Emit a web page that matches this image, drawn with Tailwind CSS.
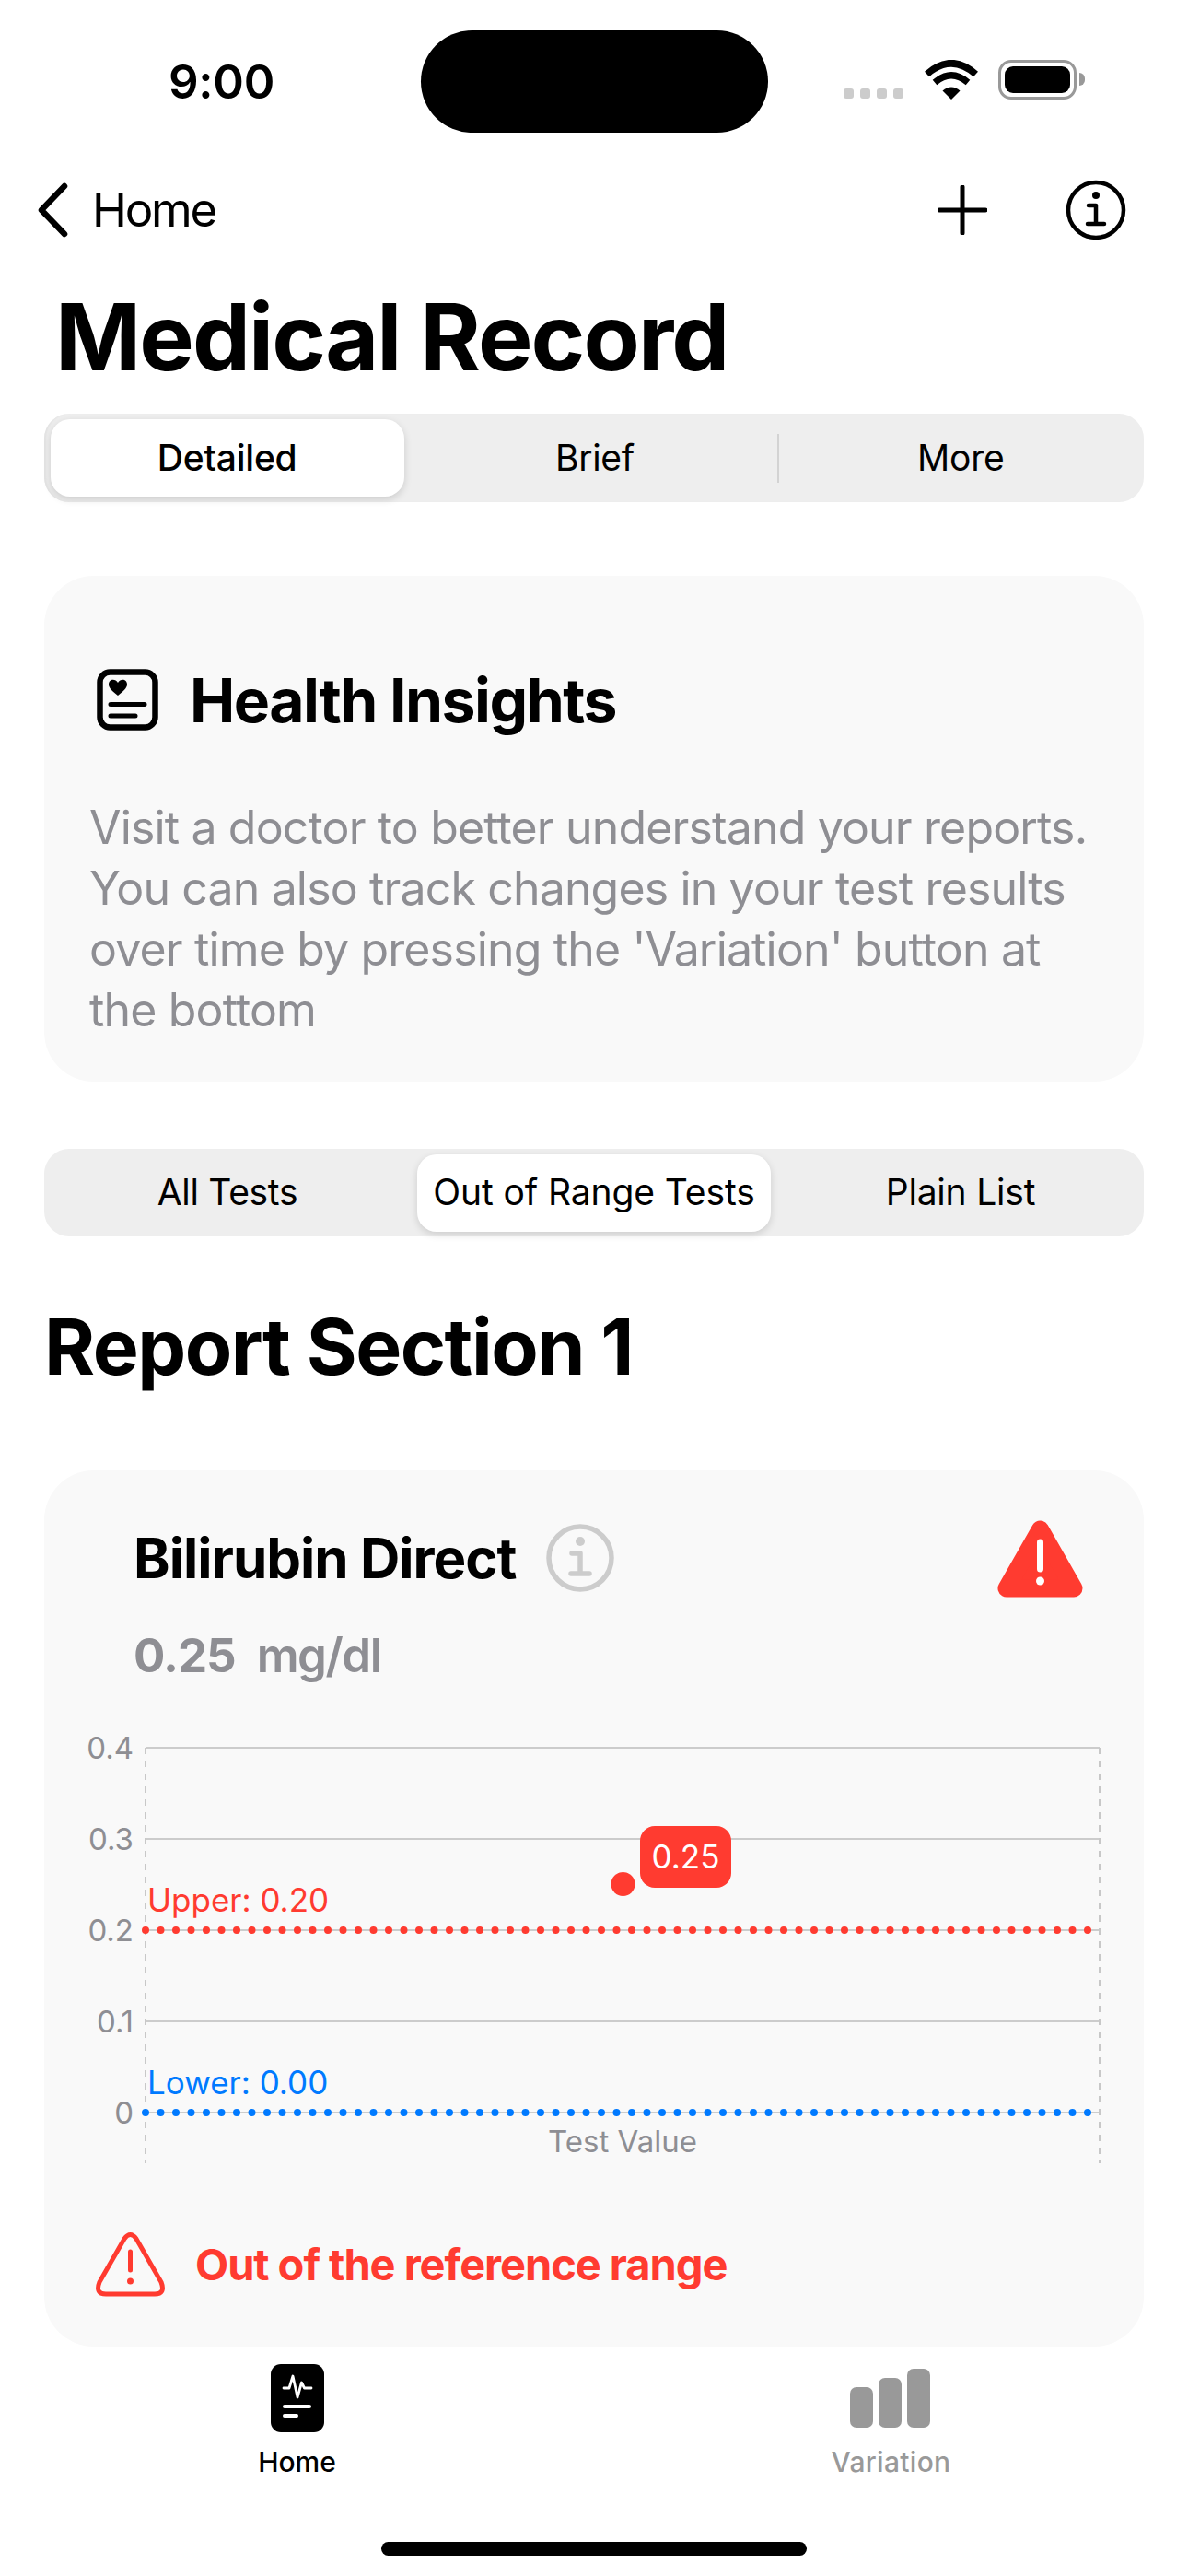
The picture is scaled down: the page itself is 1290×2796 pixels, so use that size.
<!DOCTYPE html>
<html lang="en">
<head>
    <meta charset="UTF-8">
    <meta name="viewport" content="width=device-width, initial-scale=1.0">
    <script src="https://cdn.jsdelivr.net/npm/@tailwindcss/browser@4"></script>
    <title>Medical Record</title>
</head>
<body class="w-[1290px] h-[2796px] bg-white text-black overflow-hidden flex flex-col font-[Inter,sans-serif]">

    <!-- Status bar -->
    <div class="h-[178px] pt-[33px] flex items-start shrink-0">
        <div class="w-[457px] pl-[183px] pt-[26px] text-[51px] leading-[60px] font-semibold tracking-[-0.3px]">9:00</div>
        <div class="w-[377px] h-[111px] bg-black rounded-full"></div>
        <div class="pl-[82px] pt-[32px] flex items-start">
            <div class="flex gap-[7px] pt-[31px]">
                <span class="w-[11px] h-[11px] rounded-[3px] bg-[#cccccc]"></span>
                <span class="w-[11px] h-[11px] rounded-[3px] bg-[#cccccc]"></span>
                <span class="w-[11px] h-[11px] rounded-[3px] bg-[#cccccc]"></span>
                <span class="w-[11px] h-[11px] rounded-[3px] bg-[#cccccc]"></span>
            </div>
            <svg class="ml-[23px]" width="58" height="43" viewBox="0 0 58 43">
                <path d="M29 43 L19.5 33.5 Q29 25.5 38.5 33.5Z" fill="#000"/>
                <path d="M11 24.5 Q29 9 47 24.5" fill="none" stroke="#000" stroke-width="7"/>
                <path d="M2.5 15.5 Q29 -8 55.5 15.5" fill="none" stroke="#000" stroke-width="7.5"/>
            </svg>
            <div class="ml-[22px] w-[85px] h-[43px] rounded-[14px] border-[3px] border-[#999999] p-[4px]">
                <div class="w-full h-full rounded-[9px] bg-black"></div>
            </div>
            <div class="ml-[3px] mt-[14px] w-[6px] h-[14px] rounded-r-full bg-[#999999]"></div>
        </div>
    </div>

    <!-- Nav bar -->
    <div class="h-[100px] pl-[39px] pr-[67px] flex items-center shrink-0">
        <svg width="36" height="60" viewBox="0 0 36 60">
            <path d="M31 4 L6 30 L31 56" fill="none" stroke="#000" stroke-width="6.5" stroke-linecap="round" stroke-linejoin="round"/>
        </svg>
        <span class="ml-[25px] text-[51px] leading-[60px] tracking-[-2.2px]">Home</span>
        <svg class="ml-auto" width="54" height="54" viewBox="0 0 54 54">
            <path d="M27 2 V52 M2 27 H52" fill="none" stroke="#000" stroke-width="5" stroke-linecap="round"/>
        </svg>
        <svg class="ml-[85px]" width="66" height="66" viewBox="0 0 66 66">
            <circle cx="33" cy="33" r="30" fill="none" stroke="#000" stroke-width="4.5"/>
            <circle cx="33" cy="17" r="4" fill="#000"/>
            <path d="M25 28 H33 V48 M24 48 H42" fill="none" stroke="#000" stroke-width="4.5" stroke-linecap="round" stroke-linejoin="round"/>
        </svg>
    </div>

    <!-- Title -->
    <h1 class="h-[171px] pl-[60px] pt-[28px] text-[100px] leading-[120px] font-bold tracking-[-1.9px] shrink-0">Medical Record</h1>

    <!-- Top segmented control -->
    <div class="mx-[48px] h-[96px] rounded-[27px] bg-[#eeeeee] flex items-center shrink-0 shadow-[inset_3px_0_2px_-1px_#e2e2e2]">
        <div class="flex-1 flex justify-center pr-[2px]"><div class="w-[384px] h-[84px] rounded-[21px] bg-white shadow-[0_3px_8px_rgba(0,0,0,0.14)] flex items-center justify-center text-[39px] font-medium tracking-[-0.2px]">Detailed</div></div>
        <div class="flex-1 flex justify-center text-[39px] tracking-[-0.3px]">Brief</div>
        <div class="w-[2px] h-[53px] -mx-[1px] bg-[#d3d3d3]"></div>
        <div class="flex-1 flex justify-center text-[39px] tracking-[-0.2px]">More</div>
    </div>

    <!-- Health insights card -->
    <div class="mx-[48px] mt-[80px] h-[549px] rounded-[54px] bg-[#f9f9f9] pt-[101px] pl-[49px] shrink-0">
        <div class="h-[67px] pl-[8px] flex items-center">
            <svg width="67" height="67" viewBox="0 0 67 67">
                <rect x="3.5" y="3.5" width="60" height="60" rx="11" fill="none" stroke="#000" stroke-width="6.5"/>
                <path d="M23 29 C14 22 13 19 13 17 C13 11 20 10 23 15 C26 10 33 11 33 17 C33 19 32 22 23 29Z" fill="#000"/>
                <path d="M15 38.5 H52 M15 51 H42" fill="none" stroke="#000" stroke-width="5" stroke-linecap="round"/>
            </svg>
            <h2 class="ml-[34px] text-[66px] leading-[80px] font-bold tracking-[-1.5px]">Health Insights</h2>
        </div>
        <p class="mt-[72px] w-[1130px] text-[50px] leading-[66px] text-[#8e8e93] tracking-[-0.85px]">Visit a doctor to better understand your reports.<br>You can also track changes in your test results<br>over time by pressing the 'Variation' button at<br>the bottom</p>
    </div>

    <!-- Test filter segmented control -->
    <div class="mx-[48px] mt-[73px] h-[95px] rounded-[27px] bg-[#eeeeee] flex items-center shrink-0">
        <div class="flex-1 flex justify-center text-[39px] tracking-[-0.3px]">All Tests</div>
        <div class="flex-1 flex justify-center"><div class="w-[384px] h-[84px] rounded-[21px] bg-white shadow-[0_3px_8px_rgba(0,0,0,0.14)] flex items-center justify-center text-[39px] tracking-[-0.1px]">Out of Range Tests</div></div>
        <div class="flex-1 flex justify-center text-[39px] tracking-[-0.2px]">Plain List</div>
    </div>

    <!-- Section heading -->
    <h2 class="h-[254px] pl-[48px] pt-[70px] text-[84px] leading-[100px] font-bold tracking-[-1.5px] shrink-0">Report Section 1</h2>

    <!-- Test card -->
    <div class="mx-[48px] h-[951px] rounded-[54px] bg-[#f9f9f9] shrink-0 flex flex-col">
        <div class="h-[190px] pl-[97px] pr-[66px] pt-[54px] flex items-start">
            <span class="mt-[5px] text-[60px] leading-[72px] font-bold tracking-[-1px]">Bilirubin Direct</span>
            <svg class="ml-[33px] mt-[4px]" width="74" height="74" viewBox="0 0 74 74">
                <circle cx="37" cy="37" r="34" fill="none" stroke="#cccccc" stroke-width="5.5"/>
                <circle cx="37" cy="19" r="5" fill="#cccccc"/>
                <path d="M28 32 H37 V54 M27 54 H47" fill="none" stroke="#cccccc" stroke-width="5.5" stroke-linecap="round" stroke-linejoin="round"/>
            </svg>
            <svg class="ml-auto" width="93" height="84" viewBox="0 0 93 84">
                <path d="M46.5 10 L10 74 H83 Z" fill="#ff3b30" stroke="#ff3b30" stroke-width="19" stroke-linejoin="round"/>
                <path d="M46.5 24 V53" stroke="#fff" stroke-width="7" stroke-linecap="round"/>
                <circle cx="46.5" cy="66" r="4.5" fill="#fff"/>
            </svg>
        </div>
        <div class="-mt-[19px] pl-[97px] h-[95px] text-[51px] leading-[60px] text-[#8e8e93] flex gap-[23px]">
            <span class="font-bold tracking-[-1px]">0.25</span>
            <span class="font-semibold tracking-[-1.5px]">mg/dl</span>
        </div>

        <!-- Chart -->
        <svg width="1194" height="488" viewBox="0 -18 1194 488" class="shrink-0" font-family="Inter, sans-serif">
            <g stroke="#cccccc" stroke-width="2">
                <path d="M110 17 H1146 M110 116 H1146 M110 215 H1146 M110 314 H1146 M110 413 H1146"/>
            </g>
            <path d="M110 17 V468 M1146 17 V468" stroke="#c8c8c8" stroke-width="2" stroke-dasharray="7 7"/>
            <path d="M110 215 H1142" stroke="#ff3b30" stroke-width="8" stroke-linecap="round" stroke-dasharray="0 16.5"/>
            <path d="M110 413 H1142" stroke="#007aff" stroke-width="8" stroke-linecap="round" stroke-dasharray="0 16.5"/>
            <g fill="#8e8e93" font-size="33" text-anchor="end">
                <text x="97" y="29">0.4</text>
                <text x="97" y="128">0.3</text>
                <text x="97" y="227">0.2</text>
                <text x="97" y="326">0.1</text>
                <text x="97" y="425">0</text>
            </g>
            <text x="112" y="195" fill="#ff3b30" font-size="35">Upper: 0.20</text>
            <text x="112" y="393" fill="#007aff" font-size="35">Lower: 0.00</text>
            <text x="628" y="456" fill="#8e8e93" font-size="33" text-anchor="middle">Test Value</text>
            <circle cx="628.5" cy="165" r="13" fill="#ff3b30"/>
            <rect x="647" y="102" width="99" height="67" rx="16" fill="#ff3b30"/>
            <text x="696.5" y="148" fill="#fff" font-size="35" text-anchor="middle">0.25</text>
        </svg>

        <div class="mt-[73px] pl-[55px] flex items-center">
            <svg width="77" height="70" viewBox="0 0 77 70">
                <path d="M32 7 L5 54 Q0 67 12 67 H65 Q77 67 72 54 L45 7 Q38.500 -2 32 7Z" fill="none" stroke="#ff3b30" stroke-width="5"/>
                <path d="M38.500 21 V41" stroke="#ff3b30" stroke-width="5" stroke-linecap="round"/>
                <circle cx="38.500" cy="53" r="3.500" fill="#ff3b30"/>
            </svg>
            <span class="ml-[32px] text-[47px] leading-[60px] font-bold text-[#ff3b30] tracking-[-1.05px]">Out of the reference range</span>
        </div>
    </div>

    <!-- Tab bar -->
    <div class="mt-[19px] flex items-start shrink-0">
        <div class="w-[645px] flex flex-col items-center">
            <svg width="58" height="74" viewBox="0 0 58 74">
                <rect width="58" height="74" rx="11" fill="#000"/>
                <path d="M14 26 H20 L24 13 L29 36 L33.500 20 L36.500 26 H44" fill="none" stroke="#fff" stroke-width="2.800" stroke-linecap="round" stroke-linejoin="round"/>
                <path d="M15 46 H42 M15 56 H28" fill="none" stroke="#fff" stroke-width="4" stroke-linecap="round"/>
            </svg>
            <span class="mt-[14px] text-[30px] leading-[36px] font-medium">Home</span>
        </div>
        <div class="w-[645px] flex flex-col items-center">
            <div class="h-[74px] flex items-end gap-[6px] pb-[5px] pr-[2px]">
                <span class="w-[25px] h-[44px] rounded-[7px] bg-[#999999]"></span>
                <span class="w-[25px] h-[54px] rounded-[7px] bg-[#999999]"></span>
                <span class="w-[25px] h-[64px] rounded-[7px] bg-[#999999]"></span>
            </div>
            <span class="mt-[14px] text-[30px] leading-[36px] font-medium tracking-[0.3px] text-[#999999]">Variation</span>
        </div>
    </div>

    <!-- Home indicator -->
    <div class="mt-[69px] mx-auto w-[462px] h-[15px] rounded-full bg-black shrink-0"></div>
</body>
</html>
